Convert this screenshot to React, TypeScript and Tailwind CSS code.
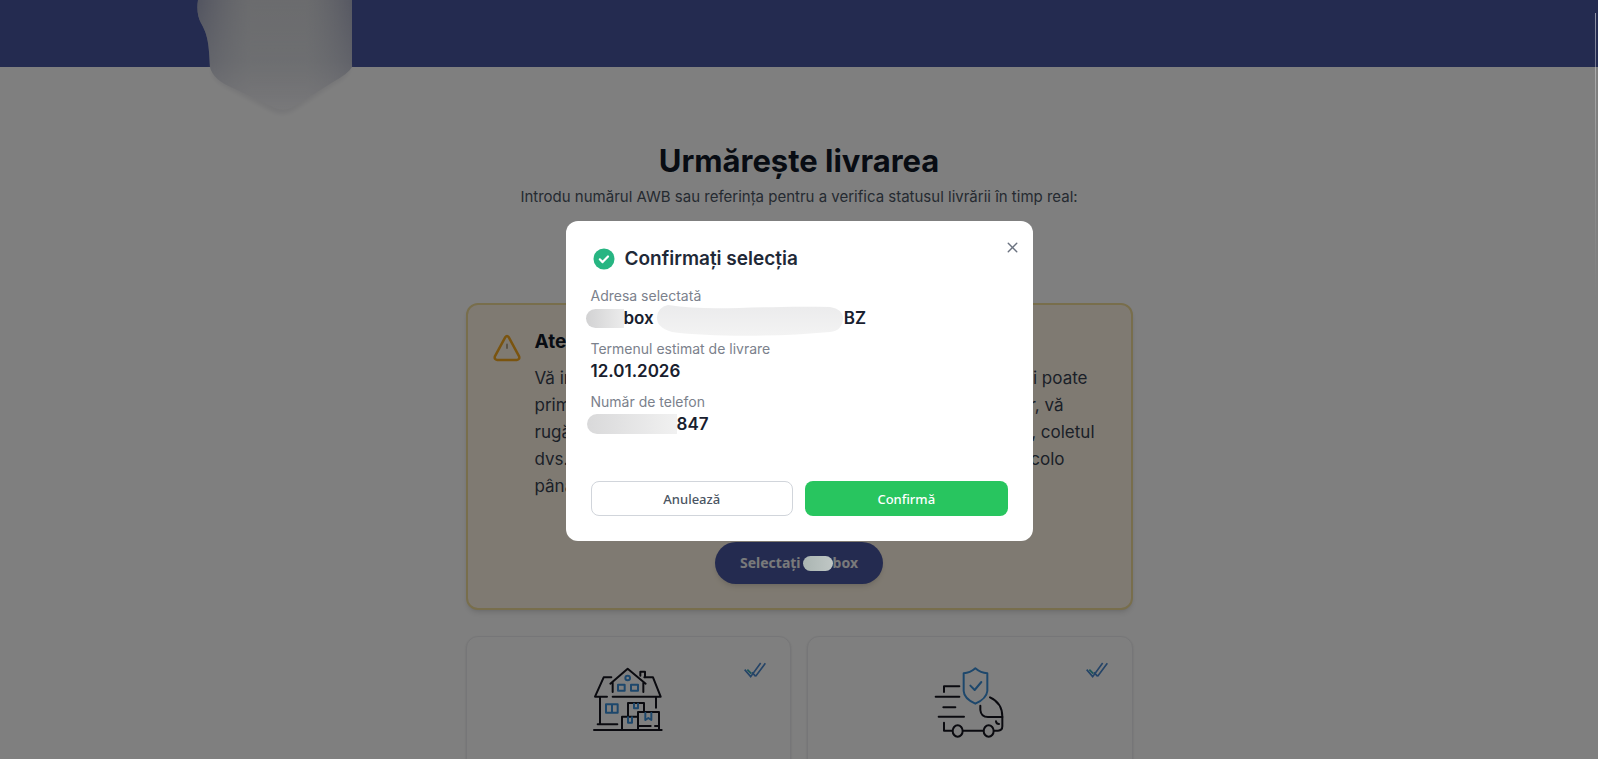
import { useState } from "react";
import type { ReactNode } from "react";
import { X } from "lucide-react";

function Logo() {
  return (
    <svg width="160" height="122" viewBox="0 0 160 122" aria-hidden="true">
      <defs>
        <linearGradient id="logoFill" x1="0" x2="0" y1="0" y2="1">
          <stop offset="0" stopColor="#dcdddf" />
          <stop offset="0.55" stopColor="#dfe1e5" />
          <stop offset="0.85" stopColor="#ebebef" />
          <stop offset="1" stopColor="#f3f3f6" />
        </linearGradient>
        <linearGradient id="logoSide" x1="0" x2="1" y1="0" y2="0">
          <stop offset="0" stopColor="#8e93b4" stopOpacity="0.7" />
          <stop offset="0.35" stopColor="#c3c6d2" stopOpacity="0.2" />
          <stop offset="0.7" stopColor="#c3c6d2" stopOpacity="0.2" />
          <stop offset="1" stopColor="#8e93b4" stopOpacity="0.6" />
        </linearGradient>
        <linearGradient id="logoFade" x1="0" x2="0" y1="0" y2="1">
          <stop offset="0" stopColor="#fff" />
          <stop offset="0.5" stopColor="#999" />
          <stop offset="0.85" stopColor="#222" />
          <stop offset="1" stopColor="#000" />
        </linearGradient>
        <mask id="logoMask">
          <rect width="160" height="122" fill="url(#logoFade)" />
        </mask>
        <filter id="logoBlur" x="-10%" y="-10%" width="120%" height="120%">
          <feGaussianBlur stdDeviation="2" />
        </filter>
      </defs>
      <path d="M14 67 L16 76 Q20 83 36 91 L74 111 Q85 117 96 111 L136 85 Q151 78 154 67 Z" fill="#ececef" filter="url(#logoBlur)" />
      <path d="M1 0 H155 V67 Q152 73 136 82 L96 107 Q86 112 76 107 L36 88 Q16 80 13 67 C12 45 11 35 4 23 Q-1 14 1 0Z" fill="url(#logoFill)" />
      <path d="M1 0 H155 V67 Q152 73 136 82 L96 107 Q86 112 76 107 L36 88 Q16 80 13 67 C12 45 11 35 4 23 Q-1 14 1 0Z" fill="url(#logoSide)" mask="url(#logoMask)" />
    </svg>
  );
}

function WarningIcon() {
  return (
    <svg className="shrink-0" width="28" height="28" viewBox="0 0 28 28" fill="none" strokeLinecap="round" strokeLinejoin="round" aria-hidden="true">
      <path d="M12.3 3.2 1.9 22.3Q1 25.7 4.2 25.9H23.8Q27 25.7 26.1 22.3L15.7 3.2Q14 .8 12.3 3.2Z" stroke="#f5a81f" strokeWidth="2.5" />
      <path d="M14 10.5V14" stroke="#b9a98c" strokeWidth="2" />
    </svg>
  );
}

function SuccessIcon() {
  return (
    <svg width="22" height="22" viewBox="0 0 22 22" fill="none" aria-hidden="true">
      <circle cx="11" cy="11" r="10.5" fill="#27b582" />
      <path d="m6.8 11.3 2.8 2.8 5.4-5.6" stroke="#fff" strokeWidth="2.2" strokeLinecap="round" strokeLinejoin="round" />
    </svg>
  );
}

function DoubleCheck() {
  return (
    <svg width="22" height="16" viewBox="0 0 66 48" fill="none" strokeWidth="5" aria-hidden="true">
      <path d="M2 23 20 44 50 3M35 43 64 4M24 31 35 43" stroke="#4a88cf" />
      <path d="m10 23 12 12" stroke="#36aab4" />
    </svg>
  );
}

function HouseIcon() {
  return (
    <svg width="70" height="65" viewBox="40 51 210 195" fill="none" strokeWidth="6" strokeLinecap="round" strokeLinejoin="round" aria-hidden="true">
      <g stroke="#15151f">
        <path d="M92 101 144 56 198 101M99 97V126M191 97V126M182 77V65H196V82" />
        <path d="M95 82H72L46 140H82M99 140H243L220 82H194" />
        <path d="M61 142V222M54 223H113M229 142V173M43 240H246" />
        <path d="M145 198V159H193V185M127 240V200H175M175 240V186H238V240M178 228H213M226 228H238" />
      </g>
      <g stroke="#3a8fd8">
        <circle cx="144" cy="84" r="7" />
        <path d="M115 104H135V122H115ZM154 104H175V122H154ZM79 163H114V188H79ZM97 163V188" />
        <path d="M163 161V175H175V161M145 202V218H157V202M197 189V210L206 204L215 210V189" />
      </g>
    </svg>
  );
}

function TruckIcon() {
  return (
    <svg width="72" height="71" viewBox="70 47 216 213" fill="none" strokeWidth="6" strokeLinecap="round" strokeLinejoin="round" aria-hidden="true">
      <g stroke="#15151f">
        <path d="M146 105H100V122M75 136H146M98 168H134M84 196H160M100 214V238H124M158 238H218M250 238H262Q275 238 275 225V196C275 168 260 148 238 138" />
        <path d="M209 163V176Q211 197 232 197H275M256 210Q257 218 265 218" />
        <ellipse cx="141" cy="239" rx="15" ry="17" />
        <ellipse cx="234" cy="239" rx="15" ry="17" />
      </g>
      <g stroke="#3a8fd8">
        <path d="M194 51Q178 65 159 66V119C160 139 176 149 194 157C212 149 228 139 230 119V66Q210 65 194 51Z" />
        <path d="m179 103 13 13 20-24" />
      </g>
    </svg>
  );
}

function OptionCard({ icon }: { icon: ReactNode }) {
  return (
    <article className="relative flex h-52 items-start justify-center rounded-xl border border-[#ededf0] bg-white pt-[30px] shadow-sm">
      {icon}
      <span className="absolute top-[25px] right-6">
        <DoubleCheck />
      </span>
    </article>
  );
}

function ConfirmDialog({ onClose }: { onClose: () => void }) {
  return (
    <div className="fixed inset-0 flex items-center justify-center bg-black/50 pt-[3px]">
      <section role="dialog" aria-modal="true" aria-labelledby="dialog-title" className="relative w-full max-w-[467px] rounded-xl bg-white px-[25px] pt-6 pb-[25px]">
        <button type="button" aria-label="Închide" onClick={onClose} className="absolute top-[18px] right-3 text-[#6b7280]">
          <X size={17} strokeWidth={2} />
        </button>
        <div className="flex items-center gap-2.5 pl-0.5">
          <SuccessIcon />
          <h2 id="dialog-title" className="text-[19px] leading-7 font-semibold text-[#1f2937]">
            Confirmați selecția
          </h2>
        </div>
        <dl className="mt-[13px] flex flex-col gap-[9px] text-[17px] font-semibold text-[#18202e]">
          <div>
            <dt className="text-sm leading-5 font-normal text-[#7b818c]">Adresa selectată</dt>
            <dd className="flex h-6 items-center leading-6">
              <span className="-ml-[5px] h-[19px] w-[38px] rounded-l-full rounded-r-lg bg-linear-to-r from-[#d2d2d3] to-[#ececec]" />
              <span>box</span>
              <svg className="-mt-2 -mb-3 ml-0.5 shrink-0" width="188" height="32" viewBox="0 0 188 32" aria-hidden="true">
                <defs>
                  <linearGradient id="addressFill" x1="0" x2="0" y1="0" y2="1">
                    <stop offset="0" stopColor="#ebebec" />
                    <stop offset="1" stopColor="#f3f3f3" />
                  </linearGradient>
                </defs>
                <path d="M12 1C55 8 105 1 174 3Q187 5 187 15Q186 27 174 28C120 33 55 33 16 28Q0 23 1 13Q2 3 12 1Z" fill="url(#addressFill)" />
              </svg>
              <span>BZ</span>
            </dd>
          </div>
          <div>
            <dt className="text-sm leading-5 font-normal text-[#7b818c]">Termenul estimat de livrare</dt>
            <dd className="leading-6">12.01.2026</dd>
          </div>
          <div>
            <dt className="text-sm leading-5 font-normal text-[#7b818c]">Număr de telefon</dt>
            <dd className="flex items-center leading-6">
              <span className="-ml-1 h-[20px] w-[90px] rounded-l-full rounded-r-lg bg-linear-to-r from-[#d9d9da] to-[#f1f1f1]" />
              <span>847</span>
            </dd>
          </div>
        </dl>
        <div className="mt-[45px] grid grid-cols-2 gap-3 font-['Noto_Sans',sans-serif] text-[13px] leading-5 font-medium">
          <button type="button" onClick={onClose} className="h-[35px] rounded-lg border border-[#d1d5db] bg-white text-[#4b5563]">
            Anulează
          </button>
          <button type="button" onClick={onClose} className="h-[35px] rounded-lg bg-[#28c55f] text-white">
            Confirmă
          </button>
        </div>
      </section>
    </div>
  );
}

const noticeLines = [
  { start: "Vă in", end: "și poate", width: "max-w-[553px]" },
  { start: "primi", end: "ușor, vă", width: "max-w-[529px]" },
  { start: "rugăm", end: "dvs., coletul", width: "max-w-[560px]" },
  { start: "dvs.", end: "acolo", width: "max-w-[530px]" },
  { start: "până", end: "", width: "max-w-[530px]" },
];

export default function App() {
  const [open, setOpen] = useState(true);
  return (
    <div className="relative h-screen overflow-hidden bg-white font-['Inter',sans-serif]">
      <header className="h-[67px] bg-[#4856a0] pl-[197px]">
        <Logo />
      </header>
      <main className="mx-auto max-w-[667px] pt-[73px]">
        <h1 className="text-center text-[31px] leading-[42px] font-bold text-[#111827]">Urmărește livrarea</h1>
        <p className="mt-1 text-center text-[15px] leading-[22px] text-[#4b5563]">
          Introdu numărul AWB sau referința pentru a verifica statusul livrării în timp real:
        </p>
        <section className="mt-[95px] rounded-xl border-2 border-[#f0dc98] bg-[#fff5e4] px-[25px] py-6 shadow-md">
          <div className="flex gap-3.5">
            <div className="pt-[5px]">
              <WarningIcon />
            </div>
            <div className="grow">
              <h3 className="text-[19px] leading-[26px] font-bold text-[#111827]">Aten</h3>
              <div className="mt-2.5 text-[17px] leading-[27px] text-[#374151]">
                {noticeLines.map((line) => (
                  <p key={line.start} className={`flex justify-between ${line.width}`}>
                    <span>{line.start}</span>
                    <span>{line.end}</span>
                  </p>
                ))}
              </div>
            </div>
          </div>
          <div className="mt-[42px] flex justify-center">
            <button type="button" onClick={() => setOpen(true)} className="flex h-[42px] items-center rounded-full bg-[#4856a0] px-[25px] font-['Noto_Sans',sans-serif] text-sm font-bold text-[#f3f4f6] shadow-md">
              <span>Selectați</span>
              <span className="relative z-10 ml-0.5 h-[15px] w-[30px] rounded-full bg-linear-to-r from-[#aab5b2] to-[#c0c7c5]" />
              <span>box</span>
            </button>
          </div>
        </section>
        <div className="mt-[26px] grid grid-cols-2 gap-4">
          <OptionCard icon={<HouseIcon />} />
          <OptionCard icon={<TruckIcon />} />
        </div>
      </main>
      {open && <ConfirmDialog onClose={() => setOpen(false)} />}
      <div className="absolute top-[13px] right-0.5 h-72 w-px bg-linear-to-b from-white/50 via-white/15 to-transparent" />
    </div>
  );
}
